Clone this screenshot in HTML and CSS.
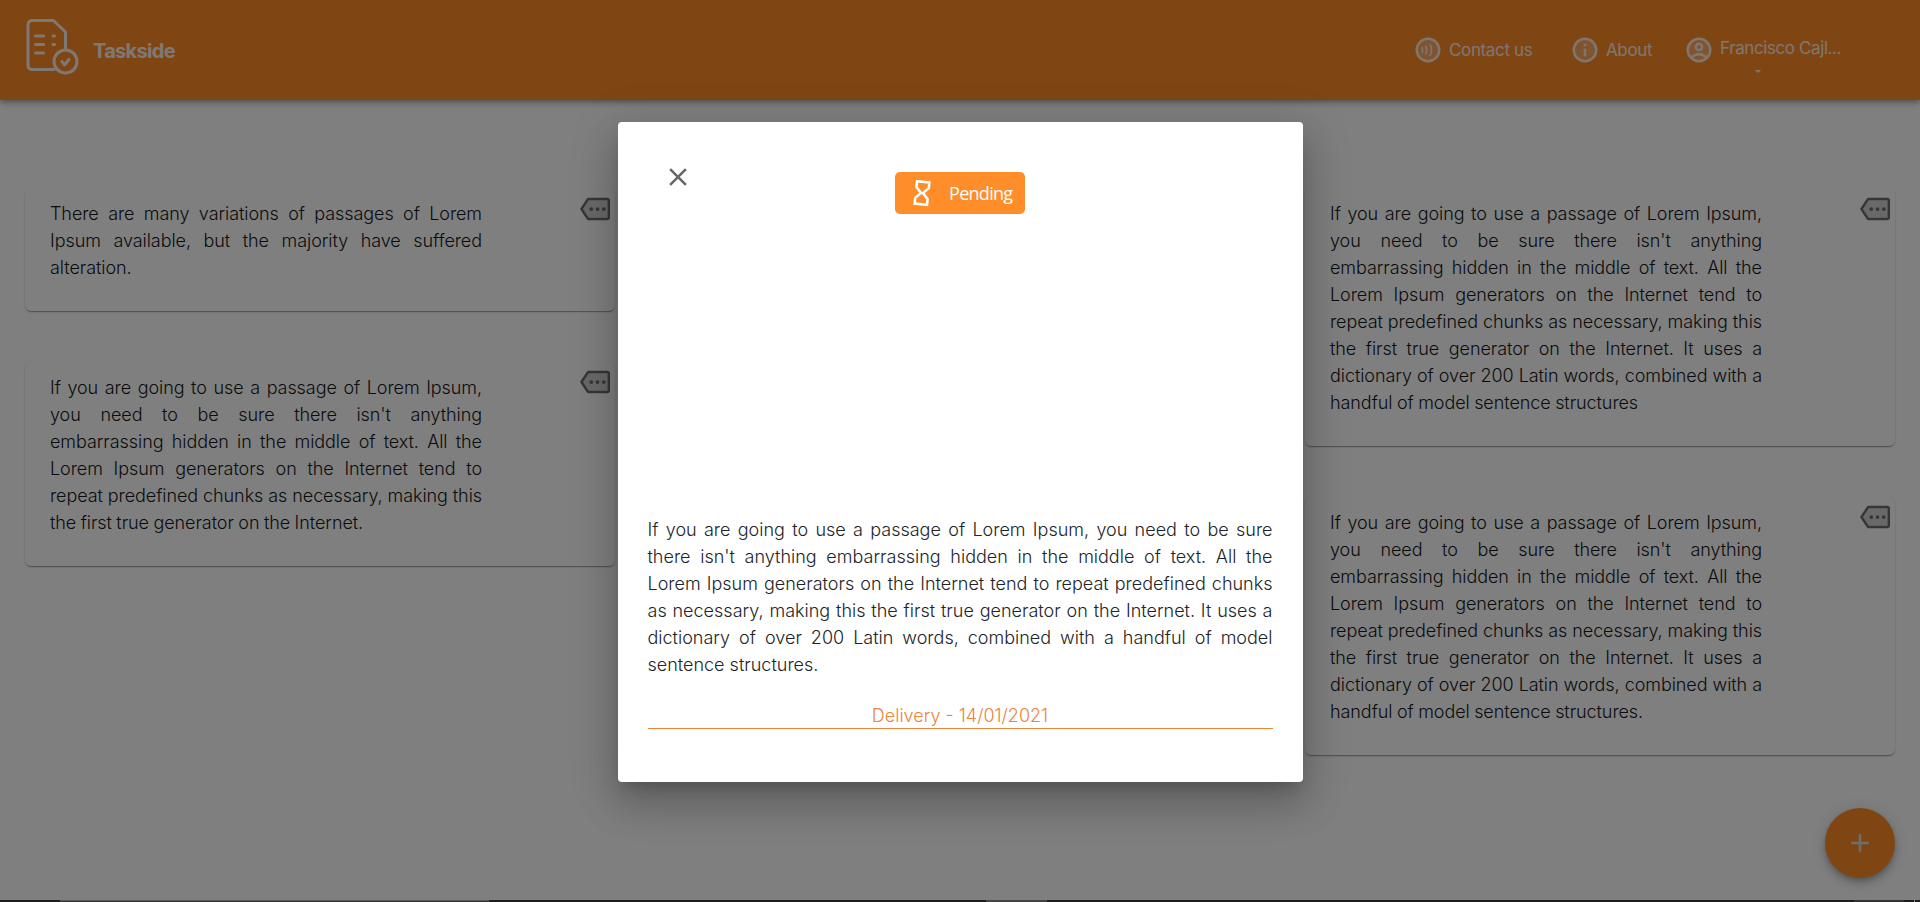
FILE: index.html
```
<!DOCTYPE html>
<html lang="en">
<head>
<meta charset="utf-8">
<title>Taskside</title>
<link rel="stylesheet" href="styles.css">
</head>
<body>
<div class="page">
  <header class="header">
    <div class="brand">
      <svg class="logo" width="54" height="58" viewBox="0 0 54 58" fill="none" stroke="currentColor" stroke-width="3" stroke-linecap="round" stroke-linejoin="round">
        <path d="M28 51.500H6a4 4 0 0 1-4-4V6.500a4 4 0 0 1 4-4h21.500L39.500 14v17"/>
        <path d="M9.500 18h8M27 18h1.500M9.500 26.500h8M27 26.500h1.500M9.500 35h8"/>
        <circle cx="39.500" cy="43.500" r="11.500"/>
        <path d="M36 43.500l2.500 3.500 4.500-5.500"/>
      </svg>
      <span class="brand-name">Taskside</span>
    </div>
    <nav class="nav">
      <a class="nav-item contact">
        <svg width="30" height="30" viewBox="0 0 24 24" fill="currentColor"><circle cx="12" cy="12" r="9" fill-opacity=".3"/><g fill="none" stroke="currentColor" stroke-width="2"><circle cx="12" cy="12" r="9"/><path stroke-width="1.300" d="M7.300 9.700q.9 2.300 0 4.600M10.200 8.500q1.500 3.500 0 7M13.500 7q2.600 5 0 10"/></g></svg>
        <span>Contact us</span>
      </a>
      <a class="nav-item about">
        <svg width="30" height="30" viewBox="0 0 24 24" fill="currentColor"><circle cx="12" cy="12" r="9" fill-opacity=".3"/><circle cx="12" cy="12" r="9" fill="none" stroke="currentColor" stroke-width="2"/><path d="M11 7h2v2h-2zM11 11h2v6h-2z"/></svg>
        <span>About</span>
      </a>
      <a class="nav-item user">
        <svg width="30" height="30" viewBox="0 0 24 24" fill="currentColor"><circle cx="12" cy="12" r="9" fill-opacity=".3"/><g fill="none" stroke="currentColor" stroke-width="2"><circle cx="12" cy="12" r="9"/><circle cx="12" cy="9.500" r="2.500"/><path d="M5.800 18q2.700-2.700 6.200-2.700t6.200 2.700"/></g></svg>
        <span class="user-label">Francisco Cajl...<i class="caret"></i></span>
      </a>
    </nav>
  </header>

  <main class="board">
    <section class="column">
      <article class="card">
        <p class="card-text">There are many variations of passages of Lorem Ipsum available, but the majority have suffered alteration.</p>
        <svg class="more" width="30" height="30" viewBox="0 0 24 24" fill="currentColor"><path fill-opacity=".3" d="M7.060 5L2.400 12l4.670 7H22V5z"/><path d="M22 3H7c-.69 0-1.230.35-1.590.88L0 12l5.410 8.110c.36.53.97.89 1.660.89H22c1.100 0 2-.9 2-2V5c0-1.100-.9-2-2-2zm0 16H7.070L2.400 12l4.660-7H22v14z"/><circle cx="9" cy="12" r="1.500"/><circle cx="14" cy="12" r="1.500"/><circle cx="19" cy="12" r="1.500"/></svg>
      </article>
      <article class="card">
        <p class="card-text">If you are going to use a passage of Lorem Ipsum, you need to be sure there isn't anything embarrassing hidden in the middle of text. All the Lorem Ipsum generators on the Internet tend to repeat predefined chunks as necessary, making this the first true generator on the Internet.</p>
        <svg class="more" width="30" height="30" viewBox="0 0 24 24" fill="currentColor"><path fill-opacity=".3" d="M7.060 5L2.400 12l4.670 7H22V5z"/><path d="M22 3H7c-.69 0-1.230.35-1.590.88L0 12l5.410 8.110c.36.53.97.89 1.660.89H22c1.100 0 2-.9 2-2V5c0-1.100-.9-2-2-2zm0 16H7.070L2.400 12l4.660-7H22v14z"/><circle cx="9" cy="12" r="1.500"/><circle cx="14" cy="12" r="1.500"/><circle cx="19" cy="12" r="1.500"/></svg>
      </article>
    </section>
    <section class="column"></section>
    <section class="column">
      <article class="card">
        <p class="card-text">If you are going to use a passage of Lorem Ipsum, you need to be sure there isn't anything embarrassing hidden in the middle of text. All the Lorem Ipsum generators on the Internet tend to repeat predefined chunks as necessary, making this the first true generator on the Internet. It uses a dictionary of over 200 Latin words, combined with a handful of model sentence structures</p>
        <svg class="more" width="30" height="30" viewBox="0 0 24 24" fill="currentColor"><path fill-opacity=".3" d="M7.060 5L2.400 12l4.670 7H22V5z"/><path d="M22 3H7c-.69 0-1.230.35-1.590.88L0 12l5.410 8.110c.36.53.97.89 1.660.89H22c1.100 0 2-.9 2-2V5c0-1.100-.9-2-2-2zm0 16H7.070L2.400 12l4.660-7H22v14z"/><circle cx="9" cy="12" r="1.500"/><circle cx="14" cy="12" r="1.500"/><circle cx="19" cy="12" r="1.500"/></svg>
      </article>
      <article class="card">
        <p class="card-text">If you are going to use a passage of Lorem Ipsum, you need to be sure there isn't anything embarrassing hidden in the middle of text. All the Lorem Ipsum generators on the Internet tend to repeat predefined chunks as necessary, making this the first true generator on the Internet. It uses a dictionary of over 200 Latin words, combined with a handful of model sentence structures.</p>
        <svg class="more" width="30" height="30" viewBox="0 0 24 24" fill="currentColor"><path fill-opacity=".3" d="M7.060 5L2.400 12l4.670 7H22V5z"/><path d="M22 3H7c-.69 0-1.230.35-1.590.88L0 12l5.410 8.110c.36.53.97.89 1.660.89H22c1.100 0 2-.9 2-2V5c0-1.100-.9-2-2-2zm0 16H7.070L2.400 12l4.660-7H22v14z"/><circle cx="9" cy="12" r="1.500"/><circle cx="14" cy="12" r="1.500"/><circle cx="19" cy="12" r="1.500"/></svg>
      </article>
    </section>
  </main>
  <button class="fab" aria-label="Add"><svg width="30" height="30" viewBox="0 0 24 24" fill="currentColor"><path d="M19 13h-6v6h-2v-6H5v-2h6V5h2v6h6v2z"/></svg></button>
</div>

<div class="backdrop">
  <div class="modal">
    <div class="modal-head">
      <svg class="close" width="30" height="30" viewBox="0 0 24 24" fill="currentColor"><path d="M19 6.410L17.590 5 12 10.590 6.410 5 5 6.410 10.590 12 5 17.590 6.410 19 12 13.410 17.590 19 19 17.590 13.410 12z"/></svg>
      <div class="badge">
        <svg width="30" height="30" viewBox="0 0 24 24" fill="none" stroke="currentColor" stroke-width="2"><path transform="rotate(6 12 12)" d="M7 3h10v4.600L12.800 12l4.200 4.400V21H7v-4.600L11.200 12 7 7.600z"/></svg>
        <span>Pending</span>
      </div>
    </div>
    <p class="modal-text">If you are going to use a passage of Lorem Ipsum, you need to be sure there isn't anything embarrassing hidden in the middle of text. All the Lorem Ipsum generators on the Internet tend to repeat predefined chunks as necessary, making this the first true generator on the Internet. It uses a dictionary of over 200 Latin words, combined with a handful of model sentence structures.</p>
    <div class="delivery">Delivery - 14/01/2021</div>
  </div>
</div>
<div class="taskbar"><i class="task active"></i><i class="task small"></i><i class="task tray"></i><i class="task edge"></i></div>
</body>
</html>
```
FILE: styles.css
```
* { box-sizing: border-box; }
body { margin: 0; height: 902px; overflow: hidden; font-family: Inter, "Liberation Sans", sans-serif; color: #212529; background: #fff; }
.page { height: 902px; }
.header { display: flex; justify-content: space-between; height: 100px; background: #ff8d29; color: #fff; box-shadow: 0 2px 4px -1px rgba(0,0,0,.2), 0 4px 5px rgba(0,0,0,.14), 0 1px 10px rgba(0,0,0,.12); }
.brand { display: flex; align-items: flex-start; padding: 18px 0 0 26px; color: #fff; opacity: .9; }
.brand-name { margin: 21px 0 0 13px; font-size: 20px; font-weight: 700; line-height: 24px; letter-spacing: -.7px; }
.nav { display: flex; padding: 35px 79px 0 0; font-size: 17px; line-height: 31px; letter-spacing: -.36px; }
.nav-item { display: flex; gap: 6px; opacity: .85; white-space: nowrap; }
.nav-item svg { flex: none; }
.contact { width: 119px; }
.about { width: 82px; margin-left: 38px; }
.user { width: 157px; margin-left: 32px; }
.user-label { display: flex; flex-direction: column; line-height: 26px; letter-spacing: -.4px; }
.caret { margin: 9px 0 0 35px; width: 0; border: 3px solid transparent; border-top-color: #fff; border-bottom: 0; }
.board { display: grid; grid-template-columns: repeat(3, 640px); padding-top: 88px; }
.column { display: flex; flex-direction: column; gap: 51px; padding: 0 25px; }
.card { display: flex; justify-content: space-between; padding: 12px 5.5px 30px 25px; border-radius: 6px; background: #fff; box-shadow: 0 2px 1px -1px rgba(0,0,0,.2), 0 1px 1px rgba(0,0,0,.14), 0 1px 3px rgba(0,0,0,.12); }
.card-text { width: 432px; margin: 0; color: #15181b; font-size: 18px; font-weight: 300; line-height: 27px; letter-spacing: -.07px; word-spacing: -.5px; text-align: justify; }
.more { margin-top: -6px; color: #6c6c75; }
.card + .card .more { margin-top: -7px; }
.fab { position: absolute; right: 25px; top: 808px; display: grid; place-items: center; width: 70px; height: 70px; padding: 0; border: 0; border-radius: 50%; background: #ff8d29; color: #ddd; box-shadow: 0 3px 5px -1px rgba(0,0,0,.2), 0 6px 10px rgba(0,0,0,.14), 0 1px 18px rgba(0,0,0,.12); }
.backdrop { position: absolute; inset: 0; display: grid; justify-content: center; align-content: start; padding-top: 122px; background: rgba(0,0,0,.5); }
.modal { width: 685px; height: 660px; padding: 50px 30px; border-radius: 4px; background: #fff; box-shadow: 0 11px 15px -7px rgba(0,0,0,.2), 0 24px 38px 3px rgba(0,0,0,.14), 0 9px 46px 8px rgba(0,0,0,.12); }
.modal-head { display: grid; grid-template-columns: 1fr 130px 1fr; height: 344px; align-items: start; }
.close { margin: -10px 0 0 15px; color: #666; }
.badge { display: flex; align-items: center; gap: 12px; height: 42px; padding-left: 12px; border-radius: 5px; background: #ff8d29; color: #fff; font: 18px/24px "Open Sans", sans-serif; letter-spacing: -.7px; }
.modal-text { margin: 0; font-size: 18px; font-weight: 300; line-height: 27px; text-align: justify; }
.delivery { margin-top: 25px; border-bottom: 1px solid #ee8339; color: #ee8339; font-size: 18px; font-weight: 300; line-height: 25px; text-align: center; }
.taskbar { position: absolute; left: 0; right: 0; bottom: 0; display: flex; height: 2px; background: #1e1e1e; }
.task { display: block; height: 2px; background: #444; }
.active { width: 429px; margin-left: 60px; background: #333; border-top: 1px solid #5a5a5a; }
.small { width: 61px; margin-left: 497px; }
.tray { width: 50px; margin-left: 807px; background: #333; }
.edge { width: 1px; margin-left: 10px; background: #888; }
```
